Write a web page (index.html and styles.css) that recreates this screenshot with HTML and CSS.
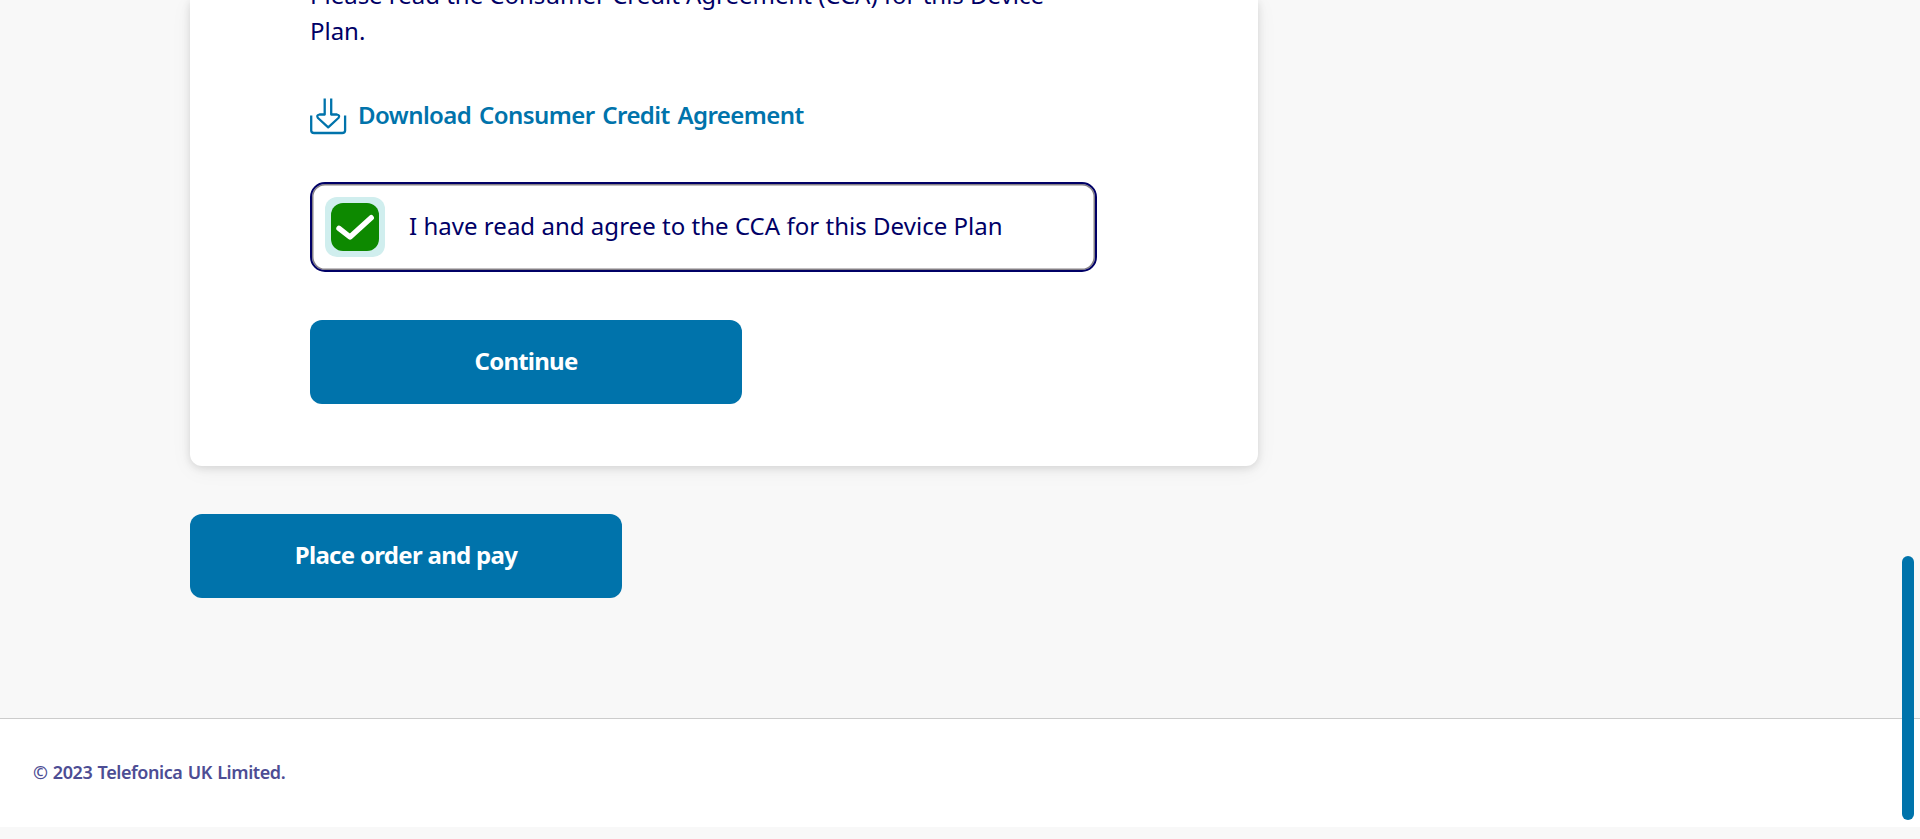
FILE: index.html
```html
<!DOCTYPE html>
<html lang="en">
<head>
<meta charset="utf-8">
<title>Consumer Credit Agreement</title>
<link rel="stylesheet" href="styles.css">
</head>
<body>
<main class="content">
  <section class="card">
    <p class="intro"><span class="intro-first">Please read the Consumer Credit Agreement (CCA) for this Device</span><br><span class="intro-last">Plan.</span></p>
    <a class="download">
      <svg class="download-icon" width="37" height="38" viewBox="0 0 37 38" fill="none" stroke="currentColor" stroke-width="2.3" stroke-linejoin="round"><path d="M1.200 18.500V33.500Q1.200 36 4.200 36H32.100Q35.100 36 35.100 33.500V18.500M14.700 1.500V17.500H9.500Q6 18.300 8 21L18.200 30.300L28.400 21Q30.400 18.300 26.900 17.500H21.200V1.500"/></svg>
      <span class="download-label">Download Consumer Credit Agreement</span>
    </a>
    <label class="agree">
      <span class="checkbox"><svg width="48" height="48" viewBox="0 0 48 48" fill="none" stroke="#fff" stroke-width="5.4" stroke-linecap="round" stroke-linejoin="round"><path d="M8 25.300L19 34L40.200 14.700"/></svg></span>
      <span class="agree-label">I have read and agree to the CCA for this Device Plan</span>
    </label>
    <button class="button"><span class="continue-label">Continue</span></button>
  </section>
  <button class="button order"><span class="order-label">Place order and pay</span></button>
</main>
<footer class="footer"><span class="copyright">© 2023 Telefonica UK Limited.</span></footer>
<div class="scroll-thumb"></div>
</body>
</html>
```
FILE: styles.css
```css
* { box-sizing: border-box; }
html { overflow: hidden; }
body { margin: 0; height: 839px; overflow: hidden; background: #f8f8f8; color: #000066; font: 24px/36px "Noto Sans", "Open Sans", sans-serif; }
.content { height: 718px; padding-left: 190px; }
.card { width: 1068px; height: 466px; padding: 0 120px; display: flex; flex-direction: column; align-items: flex-start; background: #fff; border-radius: 0 0 12px 12px; box-shadow: 0 2px 8px rgba(0,0,0,.12), 0 4px 22px rgba(0,0,0,.05); }
.intro { margin: -23px 0 0; height: 73px; letter-spacing: -.02px; white-space: nowrap; }
.download { display: flex; align-items: center; gap: 11px; height: 38px; margin-top: 47px; color: #0073ab; font-weight: 600; white-space: nowrap; }
.download-icon { flex: none; }
.download-label { margin-top: -2px; letter-spacing: -.56px; word-spacing: 2px; }
.agree { display: flex; align-items: center; width: 787px; height: 90px; margin-top: 47px; padding-left: 13px; border: 2px solid #000066; border-radius: 15px; box-shadow: inset 0 0 0 1.5px #858085; white-space: nowrap; }
.checkbox { width: 60px; height: 60px; padding: 6px; border-radius: 12px; background: #d0eeee; }
.checkbox svg { display: block; background: #0d8900; border-radius: 12px; }
.agree-label { margin: -2px 0 0 24px; letter-spacing: .03px; }
.button { display: flex; align-items: center; justify-content: center; width: 432px; height: 84px; margin: 48px 0 0; padding: 0 0 2px; border: 0; border-radius: 12px; background: #0073ab; color: #fff; font: 700 24px/36px "Noto Sans", "Open Sans", sans-serif; }
.continue-label { letter-spacing: -.78px; }
.order-label { letter-spacing: -.7px; }
.footer { display: flex; align-items: center; height: 109px; padding: 0 0 2px 33px; background: #fff; border-top: 1px solid #ccc; color: #4d4d94; font-size: 18px; font-weight: 600; letter-spacing: -.42px; word-spacing: 1px; }
.scroll-thumb { position: fixed; left: 1902px; top: 556px; width: 12px; height: 264px; border-radius: 6px; background: #0073ab; }
```
